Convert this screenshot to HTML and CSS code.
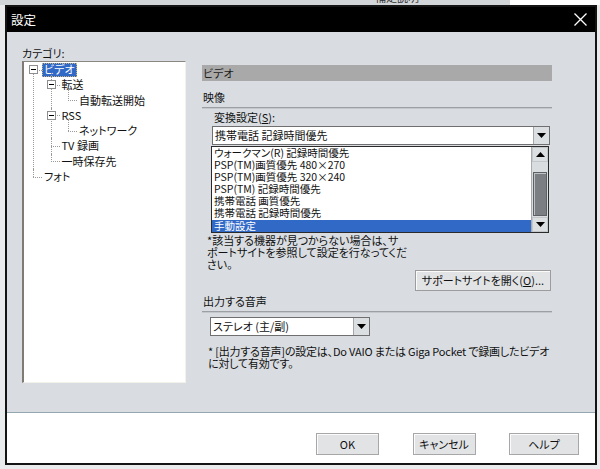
FILE: index.html
```html
<!DOCTYPE html>
<html lang="ja">
<head>
<meta charset="utf-8">
<title>設定</title>
<link rel="stylesheet" href="styles.css">
</head>
<body>
<div class="desk-top">
  <div class="desk-grey"><span class="desk-text">補足説明</span></div>
  <div class="desk-white"></div>
</div>
<div class="dialog">
  <div class="titlebar">
    <span class="title">設定</span>
    <svg class="close" width="13" height="13" viewBox="0 0 13 13"><path d="M0.5 0.5 L12.5 12.5 M12.5 0.5 L0.5 12.5" stroke="#fff" stroke-width="1.3" fill="none"/></svg>
  </div>
  <div class="body">
    <div class="leftcol">
      <div class="cat-label">カテゴリ:</div>
      <div class="treebox">
        <ul class="tree">
          <li><span class="exp"></span><span class="lbl sel">ビデオ</span>
            <ul>
              <li><span class="exp"></span><span class="lbl">転送</span>
                <ul><li><span class="lbl">自動転送開始</span></li></ul>
              </li>
              <li><span class="exp"></span><span class="lbl">RSS</span>
                <ul><li><span class="lbl">ネットワーク</span></li></ul>
              </li>
              <li><span class="lbl">TV 録画</span></li>
              <li><span class="lbl">一時保存先</span></li>
            </ul>
          </li>
          <li><span class="lbl">フォト</span></li>
        </ul>
      </div>
    </div>
    <div class="rightcol">
      <div class="pane-head">ビデオ</div>
      <div class="group-title">映像</div>
      <div class="field-label">変換設定(<u>S</u>):</div>
      <div class="combo-wrap">
        <div class="combo combo-wide">
          <span class="combo-text">携帯電話 記録時間優先</span>
          <span class="combo-btn"><svg width="9" height="5" viewBox="0 0 9 5"><polygon points="0,0 9,0 4.5,5" fill="#000"/></svg></span>
        </div>
        <div class="popup">
          <ul class="popup-list">
            <li>ウォークマン(R) 記録時間優先</li>
            <li>PSP(TM)画質優先 480×270</li>
            <li>PSP(TM)画質優先 320×240</li>
            <li>PSP(TM) 記録時間優先</li>
            <li>携帯電話 画質優先</li>
            <li>携帯電話 記録時間優先</li>
            <li class="picked">手動設定</li>
          </ul>
          <div class="vscroll">
            <span class="sb-btn"><svg width="9" height="5" viewBox="0 0 9 5"><polygon points="0,5 9,5 4.5,0" fill="#000"/></svg></span>
            <span class="sb-track"><span class="sb-thumb"></span></span>
            <span class="sb-btn"><svg width="9" height="5" viewBox="0 0 9 5"><polygon points="0,0 9,0 4.5,5" fill="#000"/></svg></span>
          </div>
        </div>
      </div>
      <div class="covered"></div>
      <p class="note">*該当する機器が見つからない場合は、サ<br>ポートサイトを参照して設定を行なってくだ<br>さい。</p>
      <div class="btn-row"><button class="btn btn-support">サポートサイトを開く(<u>O</u>)...</button></div>
      <div class="group-title gt2">出力する音声</div>
      <div class="combo combo-audio">
        <span class="combo-text">ステレオ (主/副)</span>
        <span class="combo-btn"><svg width="9" height="5" viewBox="0 0 9 5"><polygon points="0,0 9,0 4.5,5" fill="#000"/></svg></span>
      </div>
      <p class="note note2">* [出力する音声]の設定は、Do VAIO または Giga Pocket で録画したビデオ<br>に対して有効です。</p>
    </div>
  </div>
  <div class="footer">
    <button class="btn btn-foot">OK</button>
    <button class="btn btn-foot">キャンセル</button>
    <button class="btn btn-foot btn-help">ヘルプ</button>
  </div>
</div>
</body>
</html>
```

FILE: styles.css
```css
html, body {
  margin: 0;
  padding: 0;
}
body {
  width: 600px;
  height: 469px;
  overflow: hidden;
  background: #e9ebed;
  font-family: "Noto Sans CJK JP", "Noto Sans", sans-serif;
  font-size: 11px;
  color: #111;
  font-feature-settings: "palt";
}
p { margin: 0; }
ul { margin: 0; padding: 0; list-style: none; }

/* desktop strip above the window */
.desk-top {
  height: 5px;
  display: flex;
  overflow: hidden;
}
.desk-grey {
  width: 510px;
  background: #d3d6d9;
  padding-left: 375px;
  box-sizing: border-box;
}
.desk-text {
  display: block;
  margin-top: -10px;
  line-height: 14px;
  color: #333;
}
.desk-white {
  flex: 1;
  background: #fff;
}

/* dialog window */
.dialog {
  margin-left: 5px;
  width: 592px;
  height: 460px;
  box-sizing: border-box;
  border: 2px solid #141414;
  background: #d9dde1;
  display: flex;
  flex-direction: column;
}
.titlebar {
  height: 25px;
  flex: none;
  background: #000;
  display: flex;
  align-items: center;
  justify-content: space-between;
  padding: 0 8px 0 4px;
}
.title {
  color: #fff;
  font-size: 12.5px;
  line-height: 14px;
}
.close { display: block; }

.body {
  height: 380px;
  flex: none;
  box-sizing: border-box;
  padding: 14px 0 0 15px;
  display: flex;
}
.leftcol {
  width: 164px;
  flex: none;
}
.cat-label {
  line-height: 14px;
  height: 14px;
}
.treebox {
  margin-top: 1px;
  width: 164px;
  height: 322px;
  box-sizing: border-box;
  background: #fff;
  border-style: solid;
  border-width: 1px 1px 1px 2px;
  border-color: #8a8680 #f2f1ea #f2f1ea #7f7b74;
  padding: 0 0 0 9px;
}

/* tree */
.tree li {
  position: relative;
  padding-left: 9px;
  line-height: 15.3px;
}
.tree ul { padding-left: 8.5px; }
.tree li::before {
  content: "";
  position: absolute;
  left: 0;
  top: 7.5px;
  width: 9px;
  border-top: 1px dotted #9a9a9a;
}
.tree li::after {
  content: "";
  position: absolute;
  left: 0;
  top: 0;
  bottom: 0;
  border-left: 1px dotted #9a9a9a;
}
.tree > li:first-child::after { top: 7.5px; }
.tree li:last-child::after { bottom: auto; height: 8px; }
.tree ul > li:first-child::after { top: -4px; }
.tree ul > li:first-child:last-child::after { height: 12px; }
.exp {
  position: absolute;
  z-index: 1;
  left: -4px;
  top: 3px;
  width: 9px;
  height: 9px;
  box-sizing: border-box;
  border: 1px solid #8e8e8e;
  background: #fff;
}
.exp::after {
  content: "";
  position: absolute;
  left: 1px;
  top: 3px;
  width: 5px;
  height: 1px;
  background: #000;
}
.lbl {
  display: inline-block;
  vertical-align: top;
  padding: 0 2px;
  height: 15px;
  line-height: 15px;
}
.lbl.sel {
  background: #3169c6;
  color: #fff;
  outline: 1px dotted #c9b37a;
  outline-offset: -1px;
  margin-top: 1px;
  height: 14px;
  line-height: 13px;
}

/* right pane */
.rightcol {
  margin-left: 16px;
  width: 350px;
  padding-top: 19px;
}
.pane-head {
  height: 16px;
  line-height: 16px;
  background: #a9a9a9;
  padding-left: 1px;
  color: #1c1c1c;
}
.group-title {
  margin-top: 9px;
  line-height: 14px;
  padding-left: 1px;
  padding-bottom: 3px;
  border-bottom: 1px solid #9ca0a4;
  box-shadow: 0 1px 0 #c4c8cc;
}
.field-label {
  margin-top: 2px;
  padding-left: 12px;
  line-height: 14px;
}
.combo-wrap {
  position: relative;
  margin-top: 2px;
  margin-left: 10px;
  width: 338px;
}
.combo {
  height: 19px;
  box-sizing: border-box;
  border: 1px solid #6f6f6f;
  background: #fff;
  display: flex;
  align-items: stretch;
}
.combo-text {
  flex: 1;
  padding-left: 2px;
  line-height: 17px;
}
.combo-btn {
  width: 16px;
  flex: none;
  box-sizing: border-box;
  background: #dcdfe2;
  border-left: 1px solid #a5a8ab;
  display: flex;
  align-items: center;
  justify-content: center;
}
.combo-btn svg { display: block; }

/* open drop-down list */
.popup {
  position: absolute;
  z-index: 5;
  left: -1px;
  top: 20px;
  width: 338px;
  height: 87px;
  box-sizing: border-box;
  border: 1px solid #2a2a2a;
  background: #fff;
  display: flex;
}
.popup-list {
  flex: 1;
  font-size: 10.5px;
}
.popup-list li {
  line-height: 12px;
  height: 12.1px;
  padding-left: 2px;
  white-space: nowrap;
}
.popup-list li.picked {
  background: #3169c6;
  color: #fff;
  height: 12px;
  line-height: 11px;
}
.vscroll {
  width: 16px;
  flex: none;
  background: #dadde0;
  border-left: 1px solid #a8abae;
  display: flex;
  flex-direction: column;
}
.sb-btn {
  height: 15px;
  flex: none;
  box-sizing: border-box;
  background: #dcdfe2;
  border: 1px solid #c4c7ca;
  display: flex;
  align-items: center;
  justify-content: center;
}
.sb-btn svg { display: block; }
.sb-track {
  flex: 1;
  padding-top: 10px;
  display: flex;
  flex-direction: column;
  align-items: center;
}
.sb-thumb {
  width: 14px;
  height: 44px;
  box-sizing: border-box;
  background: #7b7f83;
  border: 1px solid #5d6064;
  box-shadow: inset 1px 1px 0 #bfc2c5;
}

.covered {
  height: 89px;
}
.note {
  padding-left: 5px;
  line-height: 12px;
}
.btn-row {
  display: flex;
  justify-content: flex-end;
  padding-right: 1px;
}
.btn {
  font-family: inherit;
  font-size: 11px;
  color: #111;
  font-feature-settings: "palt";
  background: #e1e3e5;
  border: 1px solid #9c9c9c;
  box-shadow: inset 1px 1px 0 #fbfbfb;
  padding: 0;
  margin: 0;
}
.btn-support {
  width: 136px;
  height: 21px;
  line-height: 19px;
}
.gt2 { margin-top: 3px; }
.combo-audio {
  margin-top: 5px;
  margin-left: 8px;
  width: 160px;
}
.note2 {
  margin-top: 9px;
  padding-left: 6px;
  white-space: nowrap;
  letter-spacing: -0.2px;
}

/* footer */
.footer {
  flex: 1;
  box-sizing: border-box;
  background: #fff;
  border-top: 1px solid #94a6b0;
  padding: 20px 16px 0 0;
  display: flex;
  justify-content: flex-end;
  align-items: flex-start;
  gap: 33.5px;
}
.btn-foot {
  width: 63px;
  height: 22px;
  line-height: 20px;
  border-color: #a7a7a7;
}
.btn-help { width: 70px; }
```
